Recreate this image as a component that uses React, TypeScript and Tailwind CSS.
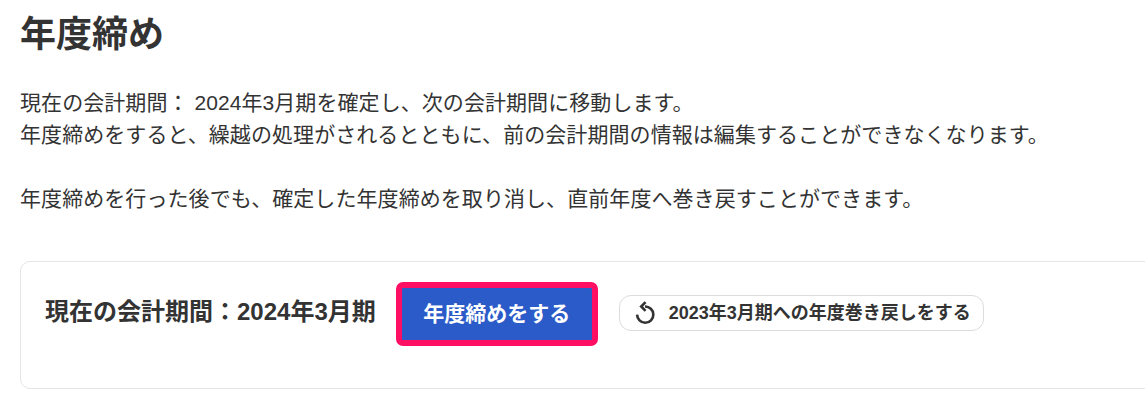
import React from "react";

export default function App() {
  return (
    <div className="w-[1145px] h-[404px] overflow-hidden bg-white text-[#333333] pl-5 font-['Liberation_Sans','Noto_Sans_CJK_JP',sans-serif]">
      <h1 className="text-[36px] leading-[46px] font-bold mt-[12px]">年度締め</h1>
      <div className="mt-[29px] text-[21px] leading-[32px] tracking-[0.07px]">
        <p>現在の会計期間： 2024年3月期を確定し、次の会計期間に移動します。</p>
        <p>年度締めをすると、繰越の処理がされるとともに、前の会計期間の情報は編集することができなくなります。</p>
        <p className="mt-[32px]">年度締めを行った後でも、確定した年度締めを取り消し、直前年度へ巻き戻すことができます。</p>
      </div>
      <div className="mt-[46px] w-[1200px] h-[128px] rounded-[10px] border border-[#e5e5e5] pl-[24px] pt-[20px] flex items-start">
        <span className="text-[24px] font-bold leading-[60px] whitespace-nowrap">現在の会計期間：2024年3月期</span>
        <button className="ml-[20px] w-[202px] h-[64px] rounded-[7px] border-[6px] border-[#ff0f64] bg-[#2b5bc8] text-white text-[21px] font-bold whitespace-nowrap">年度締めをする</button>
        <button className="ml-[21px] mt-[13px] h-[36px] w-[365px] rounded-[12px] border border-[#dcdcdc] flex items-center pl-[12px] text-[18px] font-bold whitespace-nowrap">
          <svg width="26" height="26" viewBox="0 0 24 24" fill="none" stroke="#333" strokeWidth="2.4" className="mr-[11px] shrink-0">
            <path d="M12 6 A7.5 7.5 0 1 1 4.7 13.5" />
            <path d="M12.5 2 L8.5 6 L12.5 10" />
          </svg>
          2023年3月期への年度巻き戻しをする
        </button>
      </div>
    </div>
  );
}
